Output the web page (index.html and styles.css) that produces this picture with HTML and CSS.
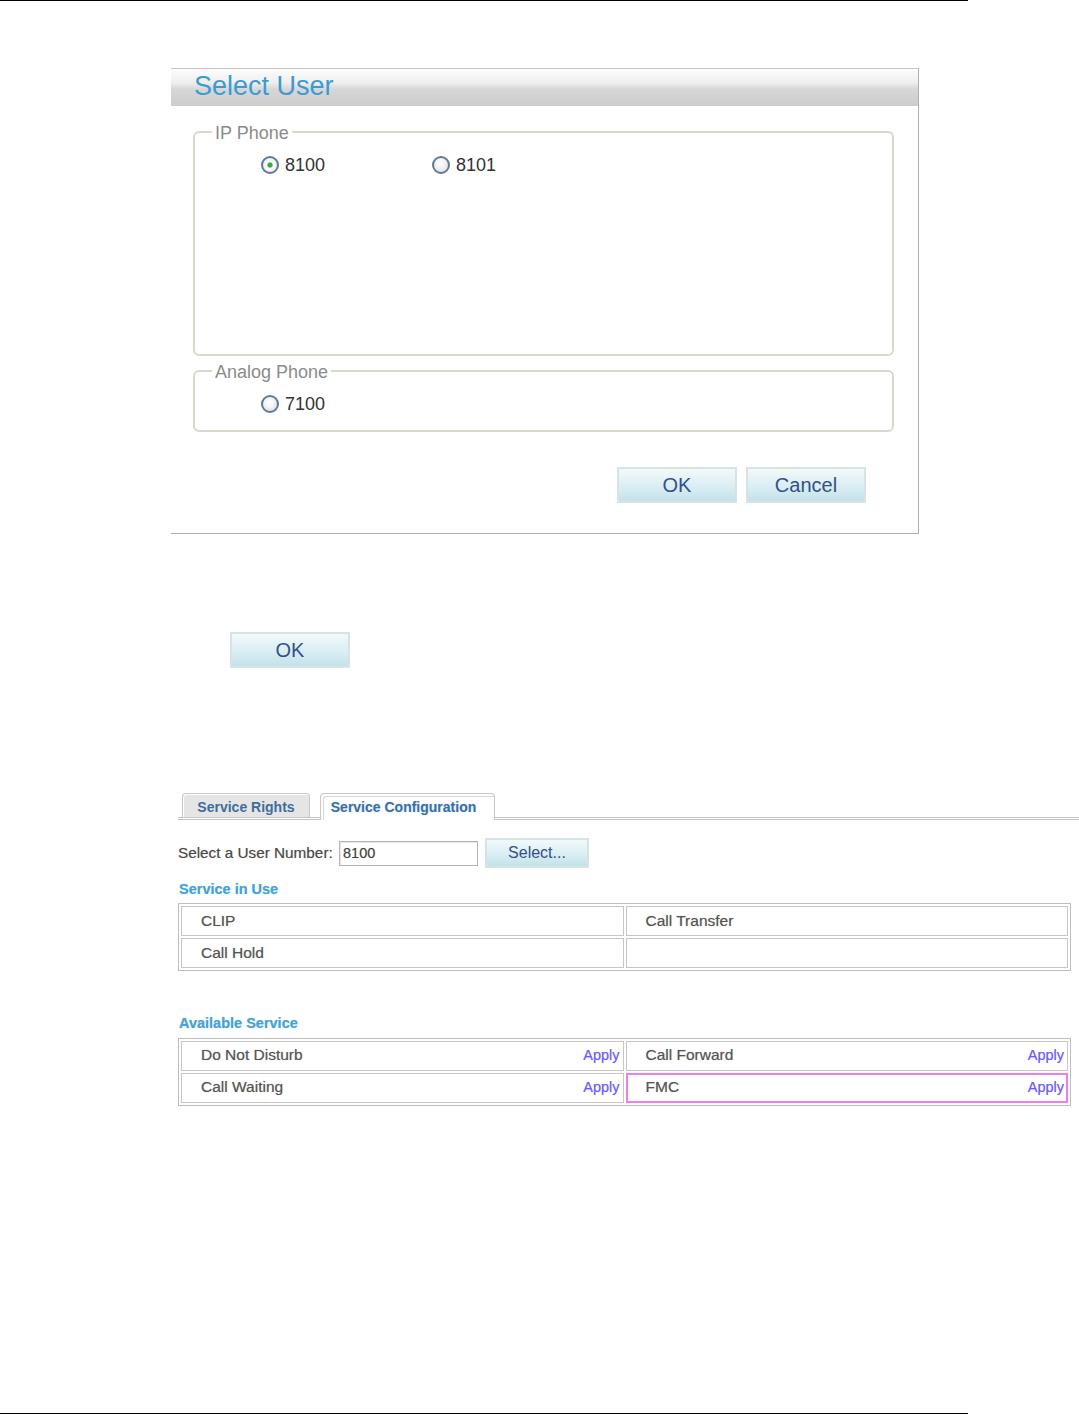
FILE: index.html
```html
<!DOCTYPE html>
<html>
<head>
<meta charset="utf-8">
<link rel="stylesheet" href="styles.css">
</head>
<body>
<div class="page">
  <div class="rule rule-top"></div>

  <div class="dialog">
    <div class="dialog-head">Select User</div>
    <div class="dialog-body">
      <div class="group group-ip">
        <span class="legend">IP Phone</span>
        <div class="radios">
          <label class="radio-item wide"><input type="radio" name="u" checked><span>8100</span></label>
          <label class="radio-item"><input type="radio" name="u"><span>8101</span></label>
        </div>
      </div>
      <div class="group group-analog">
        <span class="legend">Analog Phone</span>
        <div class="radios">
          <label class="radio-item"><input type="radio" name="u"><span>7100</span></label>
        </div>
      </div>
      <div class="dialog-buttons">
        <button class="btn">OK</button>
        <button class="btn">Cancel</button>
      </div>
    </div>
  </div>

  <div class="ok-row">
    <button class="btn">OK</button>
  </div>

  <div class="service">
    <div class="tabs">
      <div class="tab tab-inactive">Service Rights</div>
      <div class="tab tab-active">Service Configuration</div>
    </div>
    <div class="select-row">
      <span class="select-label">Select a User Number:</span>
      <input class="num-input" type="text" value="8100">
      <button class="btn btn-select">Select...</button>
    </div>
    <div class="section-title title-inuse">Service in Use</div>
    <table class="svc-table">
      <tr><td>CLIP</td><td>Call Transfer</td></tr>
      <tr><td>Call Hold</td><td></td></tr>
    </table>
    <div class="section-title title-avail">Available Service</div>
    <table class="svc-table">
      <tr>
        <td><div class="cell"><span>Do Not Disturb</span><a class="apply">Apply</a></div></td>
        <td><div class="cell"><span>Call Forward</span><a class="apply">Apply</a></div></td>
      </tr>
      <tr>
        <td><div class="cell"><span>Call Waiting</span><a class="apply">Apply</a></div></td>
        <td class="hl"><div class="cell"><span>FMC</span><a class="apply">Apply</a></div></td>
      </tr>
    </table>
  </div>

  <div class="rule rule-bottom"></div>
</div>
</body>
</html>
```

FILE: styles.css
```css
* { box-sizing: border-box; }
html, body { margin: 0; padding: 0; background: #fff; }
body { font-family: "Liberation Sans", Arial, sans-serif; }

.page {
  width: 1079px;
  height: 1414px;
  display: flex;
  flex-direction: column;
}

.rule { width: 968px; height: 1px; background: #000; }
.rule-bottom { margin-top: auto; margin-bottom: 0; }

/* Dialog */
.dialog {
  margin-top: 67px;
  margin-left: 171px;
  width: 748px;
  height: 466px;
  border-top: 1px solid #c4c4c4;
  border-right: 1px solid #b3afa9;
  border-bottom: 1px solid #b3afa9;
  display: flex;
  flex-direction: column;
}
.dialog-head {
  height: 37px;
  padding-left: 23px;
  background: linear-gradient(to bottom, #fdfdfd 0%, #eeeeee 38%, #d6d6d6 55%, #cdcdcd 100%);
  color: #3d9bd2;
  font-size: 27px;
  line-height: 35px;
}
.dialog-body {
  padding: 25px 0 0 22px;
  display: flex;
  flex-direction: column;
}
.group {
  position: relative;
  width: 701px;
  border: 2px solid #d9d9cb;
  border-radius: 6px;
}
.group-ip { height: 225px; }
.group-analog { height: 62px; margin-top: 14px; }
.legend {
  position: absolute;
  top: -10px;
  left: 17px;
  padding: 0 3px;
  background: #fff;
  color: #8b8b8b;
  font-size: 18px;
  line-height: 20px;
}
.radios {
  display: flex;
  padding-left: 66px;
  margin-top: 20px;
}
.radio-item {
  display: flex;
  align-items: center;
  gap: 6px;
  height: 24px;
  font-size: 18px;
  color: #333;
}
.radio-item.wide { width: 171px; }
.radio-item input {
  appearance: none;
  -webkit-appearance: none;
  margin: 0;
  width: 18px;
  height: 18px;
  border-radius: 50%;
  border: 2px solid #5f7b98;
  background: radial-gradient(circle at 45% 40%, #ffffff 0%, #f2f2f2 45%, #d6d6d6 100%);
}
.radio-item input:checked {
  background: radial-gradient(circle, #2fa53a 0%, #3cb44a 22%, #ffffff 32%, #eeeeee 70%, #d6d6d6 100%);
}
.dialog-buttons {
  display: flex;
  justify-content: flex-end;
  gap: 9px;
  margin-top: 35px;
  padding-right: 52px;
}

/* Buttons */
.btn {
  width: 120px;
  height: 36px;
  margin: 0;
  padding: 0;
  border: 2px solid #d9e3dc;
  outline: 1px solid #cfe6ee;
  outline-offset: -1px;
  background: linear-gradient(to bottom, #f3f9fb 0%, #dceff4 50%, #c3e2ea 100%);
  color: #34508a;
  font-family: "Liberation Sans", Arial, sans-serif;
  font-size: 20px;
  line-height: 30px;
}

.ok-row {
  margin-top: 98px;
  margin-left: 230px;
  display: flex;
}

/* Service section */
.service {
  margin-top: 125px;
  margin-left: 178px;
  width: 893px;
  display: flex;
  flex-direction: column;
}
.tabs {
  width: 901px;
  height: 27px;
  display: flex;
  align-items: flex-end;
  padding-left: 4px;
  gap: 10px;
  border-bottom: 3px double #c4c4c4;
}
.tab {
  height: 27px;
  margin-bottom: -3px;
  border: 1px solid #c8c8c8;
  border-bottom: none;
  border-radius: 4px 4px 0 0;
  font-size: 14px;
  font-weight: bold;
  line-height: 26px;
  color: #3e6d9b;
  text-align: center;
}
.tab-inactive {
  width: 128px;
  background: #e5e5e5;
  box-shadow: inset 1px 1px 0 #fff;
  height: 24px;
  margin-bottom: 0;
  line-height: 26px;
}
.tab-active {
  width: 175px;
  background: #fff;
  box-shadow: inset 2px 2px 0 #fff, inset 3px 3px 0 #d8d8d8;
  color: #3b6fa3;
  text-shadow: 0 0 2px #b9dcf5;
  padding-right: 8px;
}

.select-row {
  margin-top: 18px;
  height: 30px;
  display: flex;
  align-items: center;
}
.select-label {
  font-size: 15.3px;
  color: #4a4a4a;
  text-shadow: 0 0 1px #b8b0a8;
  width: 161px;
  white-space: nowrap;
}
.num-input {
  width: 139px;
  height: 25px;
  margin: 0;
  padding: 0 0 0 3px;
  border: 1px solid #b5b5b5;
  box-shadow: inset 1px 1px 0 #e6e6e6;
  font-family: "Liberation Sans", Arial, sans-serif;
  font-size: 14.5px;
  color: #444;
  text-shadow: 0 0 1px #b8b0a8;
}
.btn-select {
  width: 104px;
  height: 30px;
  margin-left: 7px;
  font-size: 16px;
  line-height: 24px;
}

.section-title {
  font-size: 14.5px;
  font-weight: bold;
  line-height: 18px;
  color: #45a2d8;
  text-shadow: 0 0 1px #9fd0ef;
  padding-left: 1px;
}
.title-inuse { margin-top: 12px; }
.title-avail { margin-top: 43px; }

.svc-table {
  width: 893px;
  border: 1px solid #bdbdbd;
  border-spacing: 2px;
  table-layout: fixed;
  margin-top: 5px;
}
.svc-table td {
  height: 30px;
  border: 1px solid #c6c6c6;
  padding: 0 3px 0 19px;
  font-size: 15.5px;
  color: #555;
  text-shadow: 0 0 1px #b3aaa4;
  vertical-align: middle;
}
.svc-table td.hl { border: 2px solid #f07cf0; padding-left: 18px; padding-right: 2px; }
.cell {
  display: flex;
  justify-content: space-between;
  align-items: center;
  padding-bottom: 3px;
}
.apply {
  color: #6b5cf5;
  font-size: 14.5px;
  text-shadow: 0 0 1px #b9b2ff;
}
.title-avail + .svc-table { margin-top: 6px; }
```
